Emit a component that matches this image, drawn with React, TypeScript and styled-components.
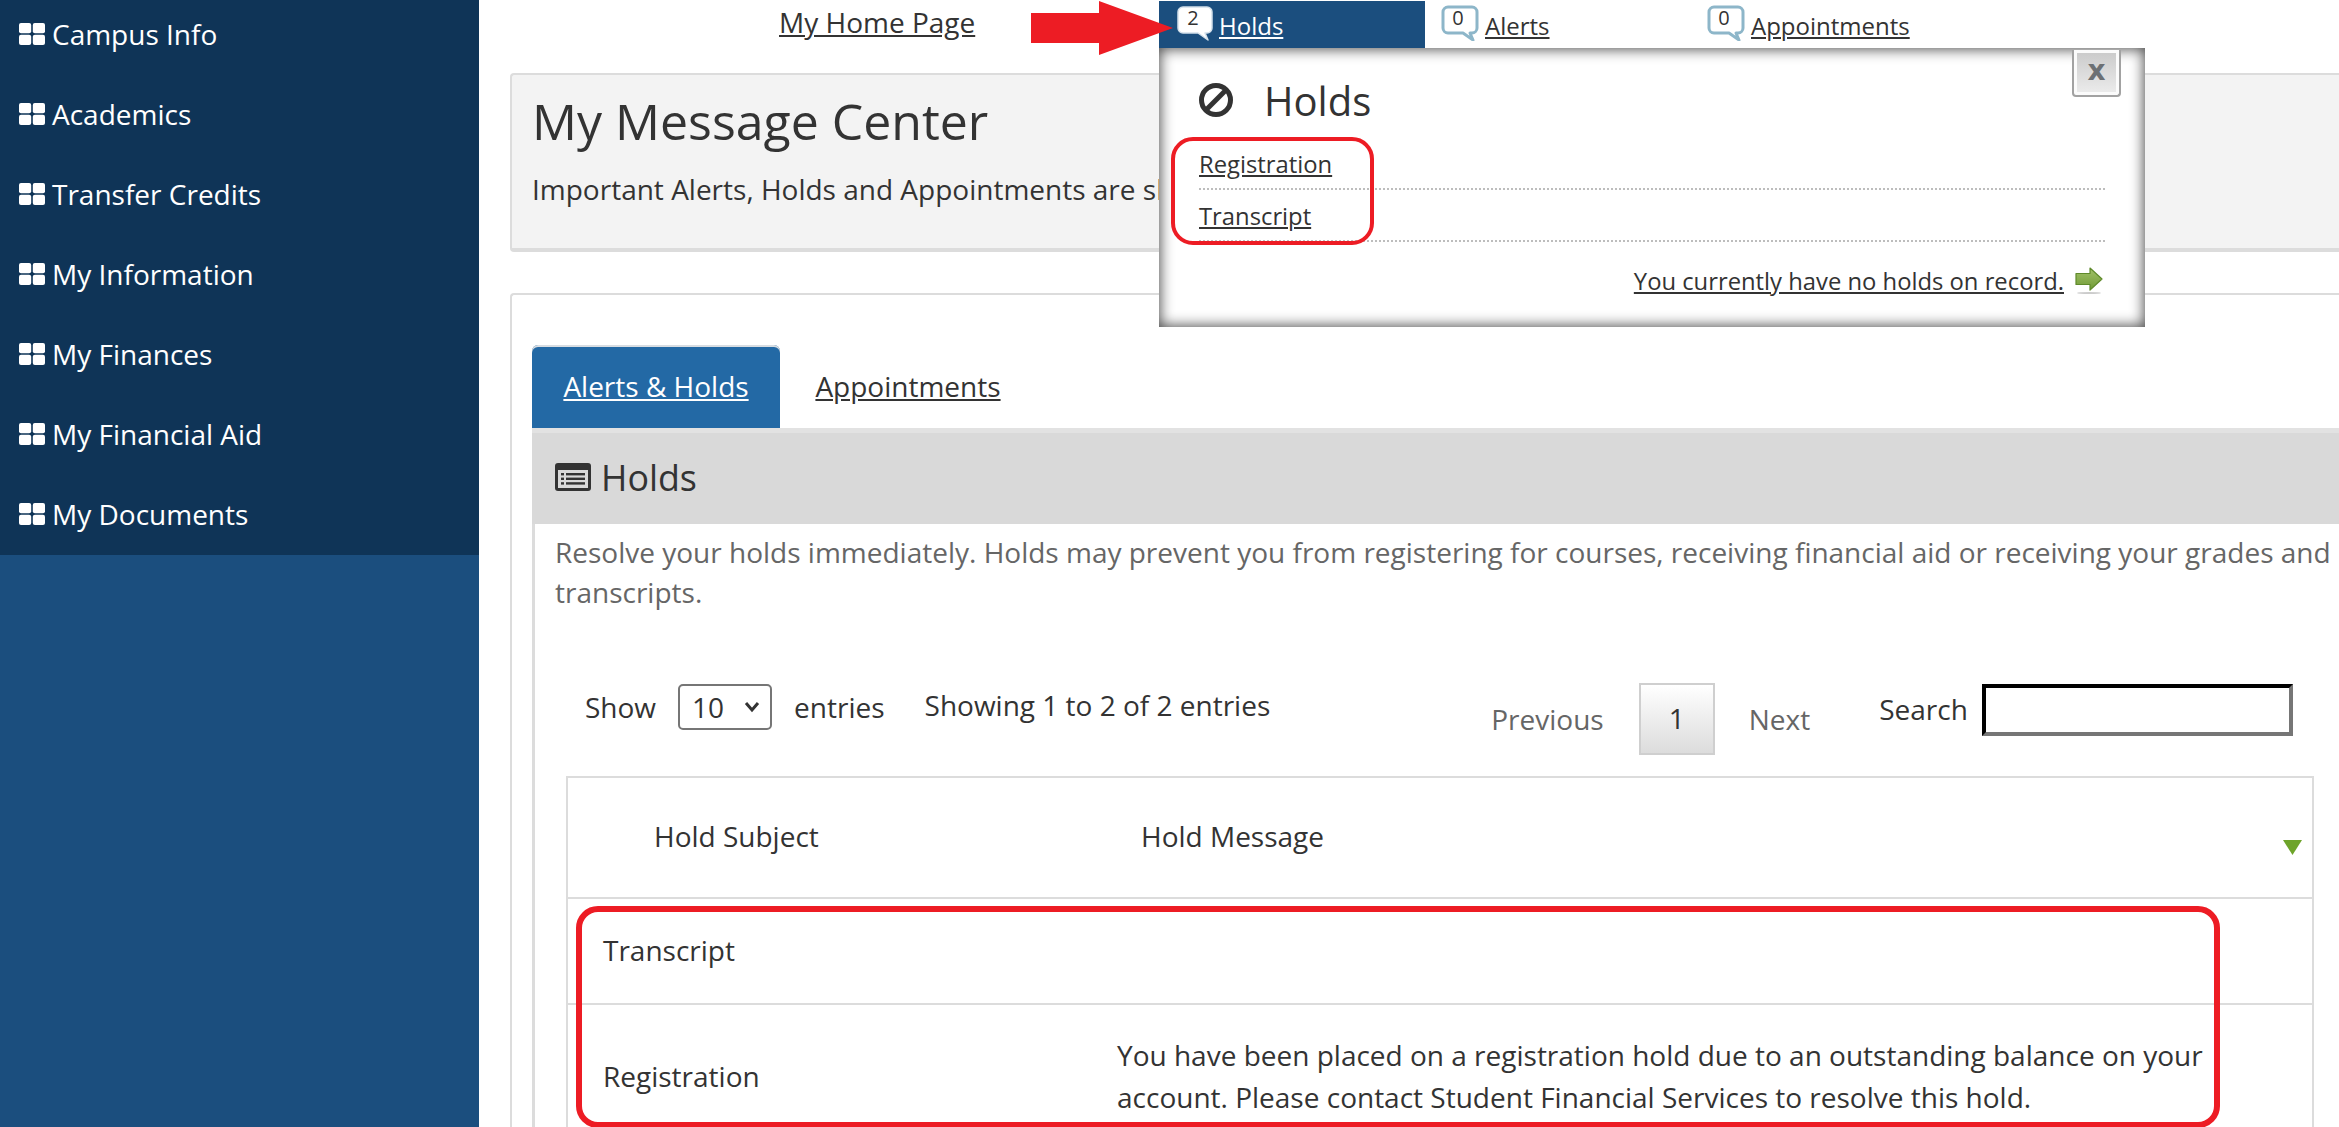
import React from 'react';
import styled, { createGlobalStyle } from 'styled-components';

const GlobalStyle = createGlobalStyle`
  html, body {
    margin: 0;
    padding: 0;
    height: 100%;
    overflow: hidden;
    background: #fff;
  }
  body {
    font-family: "Open Sans", "Liberation Sans", sans-serif;
    font-size: 28px;
    color: #333;
  }
  * {
    box-sizing: border-box;
  }
`;

const Page = styled.div`
  display: flex;
  width: 2339px;
  height: 1127px;
  overflow: hidden;
`;

const Sidebar = styled.nav`
  flex: 0 0 479px;
  background: #1b4e7e;
`;

const SideMenu = styled.ul`
  list-style: none;
  margin: -5px 0 0;
  padding: 0;
  background: #0f3457;
`;

const SideItem = styled.li`
  display: flex;
  align-items: center;
  gap: 7px;
  height: 80px;
  padding: 0 0 2px 19px;
  color: #fff;
`;

const Main = styled.main`
  flex: 1;
  min-width: 0;
  padding-left: 31px;
  overflow: hidden;
`;

const TopNav = styled.div`
  position: relative;
  display: flex;
  height: 73px;
  padding-left: 269px;
`;

const HomeLink = styled.a`
  flex: 0 0 380px;
  padding-top: 2px;
  line-height: 40px;
  color: #333;
  text-decoration: underline;
`;

const NavTab = styled.div<{ $active?: boolean }>`
  display: flex;
  align-items: flex-start;
  gap: ${p => (p.$active ? '5px' : '6px')};
  width: 266px;
  height: 48px;
  margin-top: 1px;
  padding: 4px 0 0 ${p => (p.$active ? '17px' : '16px')};
  background: ${p => (p.$active ? '#1b4e7e' : 'transparent')};
`;

const NavLabel = styled.a<{ $active?: boolean }>`
  margin-top: 5px;
  font-size: 24px;
  line-height: 32px;
  color: ${p => (p.$active ? '#fff' : '#333')};
  text-decoration: underline;
`;

const Bubble = styled.span`
  position: relative;
  flex: 0 0 38px;
  height: 36px;
`;

const BubbleCount = styled.span`
  position: absolute;
  top: 1px;
  left: 0;
  width: 34px;
  text-align: center;
  font-size: 20px;
  line-height: 24px;
  color: #333;
`;

const BubbleShape = styled.svg`
  display: block;
  filter: blur(0.5px);
`;

const RedArrow = styled.svg`
  position: absolute;
  top: 0;
  left: 521px;
  z-index: 3;
`;

const Popup = styled.div`
  position: absolute;
  top: 48px;
  left: 649px;
  z-index: 2;
  width: 986px;
  height: 279px;
  padding: 29px 40px 0;
  background: #fff;
  box-shadow: inset 0 0 14px 1px rgba(0, 0, 0, 0.72);
`;

const CloseButton = styled.div`
  position: absolute;
  top: 2px;
  right: 24px;
  display: flex;
  align-items: center;
  justify-content: center;
  width: 49px;
  height: 47px;
  padding-bottom: 4px;
  border: 2px solid #a2a2a2;
  border-top: 0;
  border-radius: 0 0 4px 4px;
  background: linear-gradient(#c9c9c9, #ededed);
  box-shadow: inset 0 0 0 3px #fbfbfb;
  font-family: "DejaVu Sans", sans-serif;
  font-size: 28px;
  font-weight: 700;
  color: #6c7074;
`;

const PopupTitle = styled.div`
  display: flex;
  align-items: center;
  gap: 31px;
  height: 46px;
  font-size: 40px;
`;

const PopupRows = styled.div`
  margin-top: 15px;
`;

const PopupRow = styled.div`
  display: flex;
  align-items: center;
  height: 52px;
  padding-top: 2px;
  border-bottom: 2px dotted #bdbdbd;
`;

const PopupLink = styled.a`
  font-size: 23.8px;
  color: #333;
  text-decoration: underline;
`;

const PopupFooter = styled.div`
  display: flex;
  align-items: center;
  justify-content: flex-end;
  gap: 11px;
  height: 40px;
  margin: 19px 2px 0 0;
  width: 904px;
`;

const RoundedMark = styled.div`
  position: absolute;
  border-style: solid;
  border-color: #ed1c24;
  pointer-events: none;
`;

const PopupMark = styled(RoundedMark)`
  top: 89px;
  left: 12px;
  width: 203px;
  height: 108px;
  border-width: 4px;
  border-radius: 22px;
`;

const TableMark = styled(RoundedMark)`
  top: 130px;
  left: 10px;
  width: 1644px;
  height: 222px;
  border-width: 6px;
  border-radius: 22px;
`;

const HeaderCard = styled.section`
  width: 1860px;
  height: 179px;
  padding: 19px 20px 0;
  background: #f3f3f3;
  border: solid #dcdcdc;
  border-width: 2px 0 4px 2px;
  border-radius: 4px 0 0 4px;
`;

const PageTitle = styled.h1`
  width: fit-content;
  margin: 0;
  font-size: 50px;
  font-weight: 400;
  line-height: 54px;
`;

const PageIntro = styled.p`
  width: fit-content;
  margin: 21px 0 0;
  line-height: 40px;
  white-space: nowrap;
`;

const PanelCard = styled.section`
  width: 1860px;
  height: 900px;
  margin-top: 41px;
  padding: 50px 0 0 20px;
  border: solid #dcdcdc;
  border-width: 2px 0 0 2px;
  border-radius: 4px 0 0 0;
`;

const Tabs = styled.div`
  display: flex;
  height: 83px;
`;

const TabButton = styled.a<{ $active?: boolean }>`
  display: flex;
  align-items: center;
  justify-content: center;
  width: 248px;
  margin-left: ${p => (p.$active ? '0' : '4px')};
  padding-bottom: 2px;
  border-radius: 6px 6px 0 0;
  background: ${p => (p.$active ? '#2369a5' : 'transparent')};
  box-shadow: ${p => (p.$active ? 'inset 0 2px 0 #d8dde2' : 'none')};
  color: ${p => (p.$active ? '#fff' : '#333')};
  text-decoration: underline;
`;

const TabBody = styled.div`
  border-left: 3px solid #dcdcdc;
`;

const SectionBand = styled.div`
  display: flex;
  align-items: center;
  gap: 10px;
  height: 96px;
  margin-left: -3px;
  padding: 0 0 4px 23px;
  background: #d9d9d9;
  border-top: 5px solid #e2e2e2;
  font-size: 35.8px;
`;

const Description = styled.p`
  width: 1810px;
  margin: 0;
  padding: 9px 0 0 20px;
  line-height: 39.5px;
  color: #666;
`;

const Controls = styled.div`
  display: flex;
  align-items: flex-start;
  margin-top: 72px;
  height: 72px;
  padding-left: 50px;
`;

const LengthGroup = styled.div`
  display: flex;
  align-items: center;
  gap: 22px;
  height: 46px;
`;

const FakeSelect = styled.div`
  display: flex;
  align-items: center;
  justify-content: space-between;
  width: 94px;
  height: 46px;
  padding: 0 10px 0 12px;
  border: 2px solid #767676;
  border-radius: 5px;
`;

const Info = styled.div`
  margin: 1px 0 0 40px;
  line-height: 40px;
`;

const Pager = styled.div`
  display: flex;
  align-items: center;
  height: 72px;
  margin-left: 221px;
  padding-bottom: 2px;
  color: #666;
`;

const PageNumber = styled.div`
  display: flex;
  align-items: center;
  justify-content: center;
  width: 76px;
  height: 72px;
  margin: 0 34px 0 35px;
  padding-bottom: 2px;
  border: 2px solid #cfcfcf;
  background: linear-gradient(#fff, #dcdcdc);
  color: #333;
`;

const SearchGroup = styled.div`
  display: flex;
  align-items: flex-start;
  gap: 14px;
  margin-left: 69px;
`;

const SearchLabel = styled.label`
  line-height: 50px;
`;

const SearchInput = styled.input`
  display: block;
  width: 311px;
  height: 52px;
  border: 4px inset #767676;
  border-color: #212121 #767676 #767676 #212121;
  background: #fff;
  outline: 0;
`;

const TableWrap = styled.div`
  position: relative;
  width: 1748px;
  margin: 20px 0 0 31px;
`;

const HoldsTable = styled.table`
  width: 100%;
  table-layout: fixed;
  border-collapse: collapse;
  border: 2px solid #dcdcdc;
`;

const HeadCell = styled.th<{ $pad: number }>`
  position: relative;
  height: 121px;
  padding: 0 0 4px ${p => p.$pad}px;
  border-bottom: 2px solid #dcdcdc;
  font-weight: 400;
  text-align: left;
`;

const SortArrow = styled.svg`
  position: absolute;
  top: 62px;
  right: 10px;
`;

const Cell = styled.td<{ $tall?: boolean }>`
  height: ${p => (p.$tall ? '146px' : '106px')};
  padding: 0 100px 2px 35px;
  border-bottom: 2px solid #dcdcdc;
  line-height: 42px;
`;

const MessageCell = styled(Cell)`
  padding-left: 21px;
`;

const GridIcon = () => (
  <svg width="26" height="22" viewBox="0 0 26 22" fill="#fff">
    <rect x="0" y="0" width="12.2" height="10.2" rx="2" />
    <rect x="13.8" y="0" width="12.2" height="10.2" rx="2" />
    <rect x="0" y="11.8" width="12.2" height="10.2" rx="2" />
    <rect x="13.8" y="11.8" width="12.2" height="10.2" rx="2" />
  </svg>
);

const ListIcon = () => (
  <svg width="36" height="28" viewBox="0 0 36 28">
    <rect x="0" y="0" width="36" height="28" rx="3" fill="#333" />
    <rect x="3" y="7" width="30" height="18" fill="#d9d9d9" />
    <g fill="#333">
      <rect x="6" y="10" width="3" height="2.4" />
      <rect x="6" y="14.6" width="3" height="2.4" />
      <rect x="6" y="19.2" width="3" height="2.4" />
      <rect x="11" y="10" width="19" height="2.4" />
      <rect x="11" y="14.6" width="19" height="2.4" />
      <rect x="11" y="19.2" width="19" height="2.4" />
    </g>
  </svg>
);

const BanIcon = () => (
  <svg width="34" height="34" viewBox="0 0 34 34" fill="none" stroke="#333" strokeWidth="5">
    <circle cx="17" cy="17" r="14.5" />
    <line x1="8" y1="26" x2="26" y2="8" />
  </svg>
);

const BubbleIcon = ({ active }: { active?: boolean }) => (
  <BubbleShape width="38" height="36" viewBox="0 0 38 36">
    <path
      d="M7 2h24a5 5 0 0 1 5 5v16a5 5 0 0 1-5 5h-2l3 7-10-7H7a5 5 0 0 1-5-5V7a5 5 0 0 1 5-5z"
      fill="#fff"
      stroke={active ? '#d4e0ea' : '#8db6c9'}
      strokeWidth={active ? 1.5 : 3}
      strokeLinejoin="round"
    />
  </BubbleShape>
);

const GreenArrow = () => (
  <svg width="28" height="28" viewBox="0 0 28 28">
    <defs>
      <linearGradient id="greenFill" x1="0" y1="0" x2="0" y2="1">
        <stop offset="0" stopColor="#a3c26a" />
        <stop offset="1" stopColor="#6f9a35" />
      </linearGradient>
    </defs>
    <ellipse cx="14" cy="26" rx="12" ry="1" fill="#ccc" />
    <path d="M1 6.5h14V1l12 11-12 11v-5.5H1z" fill="url(#greenFill)" stroke="#5f8a2b" strokeWidth="1.2" strokeLinejoin="round" />
  </svg>
);

const SelectChevron = () => (
  <svg width="16" height="12" viewBox="0 0 16 12" fill="none" stroke="#333" strokeWidth="3">
    <path d="M2 2l6 7 6-7" />
  </svg>
);

const menuItems = [
  'Campus Info',
  'Academics',
  'Transfer Credits',
  'My Information',
  'My Finances',
  'My Financial Aid',
  'My Documents',
];

const App: React.FC = () => {
  return (
    <>
      <GlobalStyle />
      <Page>
        <Sidebar>
          <SideMenu>
            {menuItems.map(item => (
              <SideItem key={item}>
                <GridIcon />
                {item}
              </SideItem>
            ))}
          </SideMenu>
        </Sidebar>
        <Main>
          <TopNav>
            <HomeLink>My Home Page</HomeLink>
            <NavTab $active>
              <Bubble>
                <BubbleIcon active />
                <BubbleCount>2</BubbleCount>
              </Bubble>
              <NavLabel $active>Holds</NavLabel>
            </NavTab>
            <NavTab>
              <Bubble>
                <BubbleIcon />
                <BubbleCount>0</BubbleCount>
              </Bubble>
              <NavLabel>Alerts</NavLabel>
            </NavTab>
            <NavTab>
              <Bubble>
                <BubbleIcon />
                <BubbleCount>0</BubbleCount>
              </Bubble>
              <NavLabel>Appointments</NavLabel>
            </NavTab>
            <RedArrow width="143" height="56" viewBox="0 0 143 56">
              <polygon points="0,13 68,13 68,1 142,28 68,55 68,43 0,43" fill="#ed1c24" />
            </RedArrow>
            <Popup>
              <CloseButton>x</CloseButton>
              <PopupTitle>
                <BanIcon />
                Holds
              </PopupTitle>
              <PopupRows>
                <PopupRow>
                  <PopupLink>Registration</PopupLink>
                </PopupRow>
                <PopupRow>
                  <PopupLink>Transcript</PopupLink>
                </PopupRow>
              </PopupRows>
              <PopupFooter>
                <PopupLink>You currently have no holds on record.</PopupLink>
                <GreenArrow />
              </PopupFooter>
              <PopupMark />
            </Popup>
          </TopNav>
          <HeaderCard>
            <PageTitle>My Message Center</PageTitle>
            <PageIntro>Important Alerts, Holds and Appointments are sh</PageIntro>
          </HeaderCard>
          <PanelCard>
            <Tabs>
              <TabButton $active>Alerts &amp; Holds</TabButton>
              <TabButton>Appointments</TabButton>
            </Tabs>
            <TabBody>
              <SectionBand>
                <ListIcon />
                Holds
              </SectionBand>
              <Description>
                Resolve your holds immediately. Holds may prevent you from registering for courses,
                receiving financial aid or receiving your grades and transcripts.
              </Description>
              <Controls>
                <LengthGroup>
                  Show
                  <FakeSelect>
                    10
                    <SelectChevron />
                  </FakeSelect>
                  entries
                </LengthGroup>
                <Info>Showing 1 to 2 of 2 entries</Info>
                <Pager>
                  Previous
                  <PageNumber>1</PageNumber>
                  Next
                </Pager>
                <SearchGroup>
                  <SearchLabel>Search</SearchLabel>
                  <SearchInput type="text" />
                </SearchGroup>
              </Controls>
              <TableWrap>
                <HoldsTable>
                  <colgroup>
                    <col style={{ width: 529 }} />
                    <col />
                  </colgroup>
                  <thead>
                    <tr>
                      <HeadCell $pad={86}>Hold Subject</HeadCell>
                      <HeadCell $pad={45}>
                        Hold Message
                        <SortArrow width="19" height="15" viewBox="0 0 19 15">
                          <polygon points="0,0 19,0 9.5,15" fill="#6ea42a" />
                        </SortArrow>
                      </HeadCell>
                    </tr>
                  </thead>
                  <tbody>
                    <tr>
                      <Cell>Transcript</Cell>
                      <MessageCell />
                    </tr>
                    <tr>
                      <Cell $tall>Registration</Cell>
                      <MessageCell $tall>
                        You have been placed on a registration hold due to an outstanding balance on
                        your account. Please contact Student Financial Services to resolve this hold.
                      </MessageCell>
                    </tr>
                  </tbody>
                </HoldsTable>
                <TableMark />
              </TableWrap>
            </TabBody>
          </PanelCard>
        </Main>
      </Page>
    </>
  );
};

export default App;
